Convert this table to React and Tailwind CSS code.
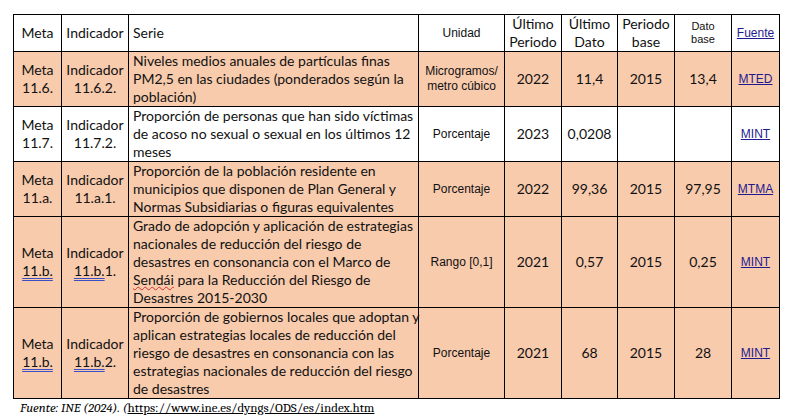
import React from 'react';

const rows = [
  {
    meta: '11.6.', ind: '11.6.2.', link: false, fill: true, h: 'h-[54px]',
    serie: ['Niveles medios anuales de partículas finas', 'PM2,5 en las ciudades (ponderados según la', 'población)'],
    unidad: ['Microgramos/', 'metro cúbico'], up: '2022', ud: '11,4', pb: '2015', db: '13,4', fuente: 'MTED',
  },
  {
    meta: '11.7.', ind: '11.7.2.', link: false, fill: false, h: 'h-[55px]',
    serie: ['Proporción de personas que han sido víctimas', 'de acoso no sexual o sexual en los últimos 12', 'meses'],
    unidad: ['Porcentaje'], up: '2023', ud: '0,0208', pb: '', db: '', fuente: 'MINT',
  },
  {
    meta: '11.a.', ind: '11.a.1.', link: false, fill: true, h: 'h-[54px]',
    serie: ['Proporción de la población residente en', 'municipios que disponen de Plan General y', 'Normas Subsidiarias o figuras equivalentes'],
    unidad: ['Porcentaje'], up: '2022', ud: '99,36', pb: '2015', db: '97,95', fuente: 'MTMA',
  },
  {
    meta: '11.b.', ind: '1', link: true, fill: true, h: 'h-[90px]',
    serie: ['Grado de adopción y aplicación de estrategias', 'nacionales de reducción del riesgo de', 'desastres en consonancia con el Marco de', 'SENDAI', 'Desastres 2015-2030'],
    unidad: ['Rango [0,1]'], up: '2021', ud: '0,57', pb: '2015', db: '0,25', fuente: 'MINT',
  },
  {
    meta: '11.b.', ind: '2', link: true, fill: true, h: 'h-[90px]',
    serie: ['Proporción de gobiernos locales que adoptan y', 'aplican estrategias locales de reducción del', 'riesgo de desastres en consonancia con las', 'estrategias nacionales de reducción del riesgo', 'de desastres'],
    unidad: ['Porcentaje'], up: '2021', ud: '68', pb: '2015', db: '28', fuente: 'MINT',
  },
];

function Dbl({ children }) {
  return <span className="underline decoration-double decoration-[#3b4fc4] underline-offset-2">{children}</span>;
}

export default function App() {
  return (
    <div className="w-[786px] h-[418px] bg-white pt-[14px] pl-[13px] text-black">
      <table className="table-fixed border-collapse w-[766px] font-[family-name:Lato,Open_Sans,sans-serif] text-[#111]">
        <colgroup>
          <col className="w-[48px]" />
          <col className="w-[67px]" />
          <col className="w-[290px]" />
          <col className="w-[86px]" />
          <col className="w-[57px]" />
          <col className="w-[56px]" />
          <col className="w-[57px]" />
          <col className="w-[57px]" />
          <col className="w-[48px]" />
        </colgroup>
        <thead>
          <tr className="h-[37px] text-[14px] leading-[18px]">
            <td className="border border-black text-center">Meta</td>
            <td className="border border-black text-center">Indicador</td>
            <td className="border border-black pl-[4px]">Serie</td>
            <td className="border border-black text-center text-[12px] font-[family-name:Liberation_Sans,Arial,sans-serif]">Unidad</td>
            <td className="border border-black text-center">Último<br />Periodo</td>
            <td className="border border-black text-center">Último<br />Dato</td>
            <td className="border border-black text-center">Periodo<br />base</td>
            <td className="border border-black text-center text-[11px] leading-[13px] font-[family-name:Liberation_Sans,Arial,sans-serif]">Dato<br />base</td>
            <td className="border border-black text-center text-[12px] font-[family-name:Liberation_Sans,Arial,sans-serif]">
              <span className="underline text-[#1f1a8f]">Fuente</span>
            </td>
          </tr>
        </thead>
        <tbody>
          {rows.map((r, i) => (
            <tr key={i} className={`${r.h} text-[14px] leading-[18px] ${r.fill ? 'bg-[#f8cbad]' : 'bg-white'}`}>
              <td className="border border-black text-center align-middle">
                Meta<br />
                {r.link ? <Dbl>{r.meta}</Dbl> : r.meta}
              </td>
              <td className="border border-black text-center align-middle">
                Indicador<br />
                {r.link ? <><Dbl>11.b.</Dbl>{r.ind}.</> : r.ind}
              </td>
              <td className="border border-black align-top pl-[4px] whitespace-nowrap">
                {r.serie.map((line, j) => (
                  <div key={j}>
                    {line === 'SENDAI' ? (
                      <>
                        <span className="underline decoration-wavy decoration-[#d03030] decoration-1">Sendái</span> para la Reducción del Riesgo de
                      </>
                    ) : line}
                  </div>
                ))}
              </td>
              <td className="border border-black text-center align-middle text-[12px] leading-[15px] font-[family-name:Liberation_Sans,Arial,sans-serif]">
                {r.unidad.map((u, j) => <div key={j}>{u}</div>)}
              </td>
              <td className="border border-black text-center align-middle">{r.up}</td>
              <td className="border border-black text-center align-middle">{r.ud}</td>
              <td className="border border-black text-center align-middle">{r.pb}</td>
              <td className="border border-black text-center align-middle">{r.db}</td>
              <td className="border border-black text-center align-middle text-[12px] font-[family-name:Liberation_Sans,Arial,sans-serif]">
                <span className="underline text-[#1f1a8f]">{r.fuente}</span>
              </td>
            </tr>
          ))}
        </tbody>
      </table>
      <p className="pl-[7px] pt-[1px] text-[13px] leading-[16px] font-serif">
        <span className="italic">Fuente: INE (2024). (</span>
        <span className="underline">https://www.ine.es/dyngs/ODS/es/index.htm</span>
      </p>
    </div>
  );
}
